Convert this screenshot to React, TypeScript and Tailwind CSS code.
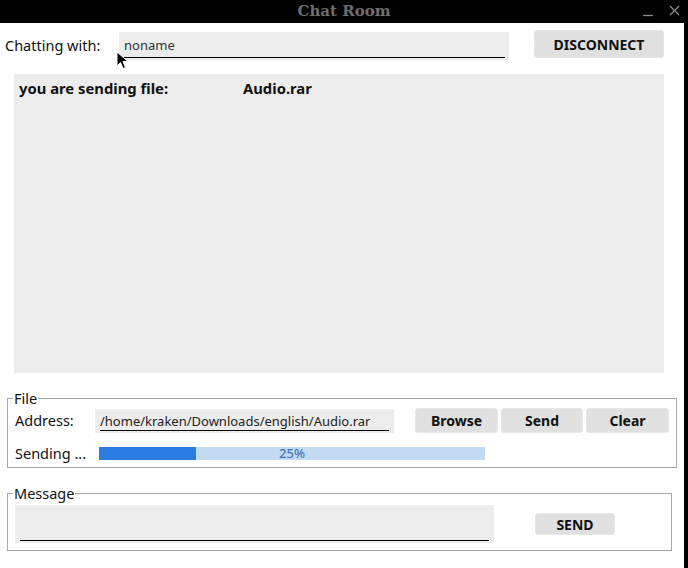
const font = { fontFamily: '"Noto Sans", "Open Sans", sans-serif' }

function Btn({ label, className }: { label: string; className: string }) {
  return (
    <button
      className={`flex items-center justify-center rounded-[3px] border border-[#e6e6e6] bg-[#e0e0e0] text-[14px] font-bold text-[#111] ${className}`}
    >
      {label}
    </button>
  )
}

function Cursor() {
  return (
    <svg className="absolute left-[116px] top-[51px]" width="13" height="19" viewBox="0 0 13 19">
      <path
        d="M1 1 L1 15 L4.5 11.5 L7 17.5 L9.5 16.5 L7 10.5 L12 10.5 Z"
        fill="#000"
        stroke="#fff"
        strokeWidth="1"
      />
    </svg>
  )
}

export default function App() {
  return (
    <div className="relative flex h-[568px] w-[688px] flex-col overflow-hidden bg-white" style={font}>
      {/* title bar */}
      <div className="relative flex h-[23px] shrink-0 items-center justify-center bg-black">
        <span
          className="text-[15px] font-bold text-[#6f6f6f]"
          style={{ fontFamily: '"DejaVu Serif", serif' }}
        >
          Chat Room
        </span>
        <svg className="absolute left-[640px] top-0" width="48" height="23" viewBox="0 0 48 23">
          <line x1="3" y1="15.5" x2="13" y2="15.5" stroke="#8a8a8a" strokeWidth="1.3" />
          <line x1="30" y1="6" x2="39" y2="15" stroke="#8a8a8a" strokeWidth="1.3" />
          <line x1="39" y1="6" x2="30" y2="15" stroke="#8a8a8a" strokeWidth="1.3" />
        </svg>
      </div>

      <div className="flex flex-1 border-r-[4px] border-black">
        <div className="flex w-[684px] flex-col">
          {/* chatting with row */}
          <div className="mt-[6px] flex h-[30px] items-center">
            <span className="ml-[5px] w-[114px] pt-[4px] text-[14.5px] text-[#111]">Chatting with:</span>
            <div className="mt-[4px] flex h-[28px] w-[390px] flex-col justify-end bg-[#ececec] px-[4px] pb-[2px]">
              <div className="border-b border-black pb-[2px] pl-[1px] text-[13px] text-[#333]">noname</div>
            </div>
            <Btn label="DISCONNECT" className="ml-[25px] h-[28px] w-[130px]" />
          </div>

          {/* chat area */}
          <div className="ml-[14px] mt-[15px] h-[299px] w-[650px] bg-[#ececec] px-[5px] pt-[3px]">
            <div className="flex text-[14.8px] font-bold text-[#111]">
              <span className="w-[224px]">you are sending file:</span>
              <span>Audio.rar</span>
            </div>
          </div>

          {/* file group */}
          <fieldset className="ml-[7px] mt-[16px] h-[79px] w-[665px] border border-[#a8a8a8] px-[7px]">
            <legend className="ml-[-2px] px-[1px] text-[14.5px] leading-[18px] text-[#111]">File</legend>
            <div className="mt-[1px] flex items-center">
              <span className="w-[80px] text-[14.5px] text-[#111]">Address:</span>
              <div className="flex h-[24px] w-[299px] flex-col justify-end bg-[#ececec] px-[5px] pb-[2px]">
                <div className="border-b border-black pb-[1px] text-[13px] leading-[16px] text-[#222]">
                  /home/kraken/Downloads/english/Audio.rar
                </div>
              </div>
              <Btn label="Browse" className="ml-[21px] h-[25px] w-[83px]" />
              <Btn label="Send" className="ml-[3px] h-[25px] w-[82px]" />
              <Btn label="Clear" className="ml-[3px] h-[25px] w-[83px]" />
            </div>
            <div className="mt-[10px] flex items-center">
              <span className="w-[84px] text-[14.5px] text-[#111]">Sending ...</span>
              <div className="relative flex h-[13px] w-[386px] bg-[#c2dbf2]">
                <div className="h-full w-[97px] bg-[#2a7de0]" />
                <span className="absolute inset-0 flex items-center justify-center text-[13px] font-medium text-[#4a74b4]">
                  25%
                </span>
              </div>
            </div>
          </fieldset>

          {/* message group */}
          <fieldset className="ml-[7px] mt-[16px] h-[67px] w-[665px] border border-[#a8a8a8] px-[7px] pt-[3px]">
            <legend className="ml-[-2px] px-[1px] text-[14.5px] leading-[18px] text-[#111]">Message</legend>
            <div className="flex items-center">
              <div className="flex h-[38px] w-[479px] flex-col justify-end bg-[#ececec] px-[5px] pb-[2px]">
                <div className="border-b border-black" />
              </div>
              <Btn label="SEND" className="ml-[41px] h-[22px] w-[80px]" />
            </div>
          </fieldset>
        </div>
      </div>

      <Cursor />
    </div>
  )
}
